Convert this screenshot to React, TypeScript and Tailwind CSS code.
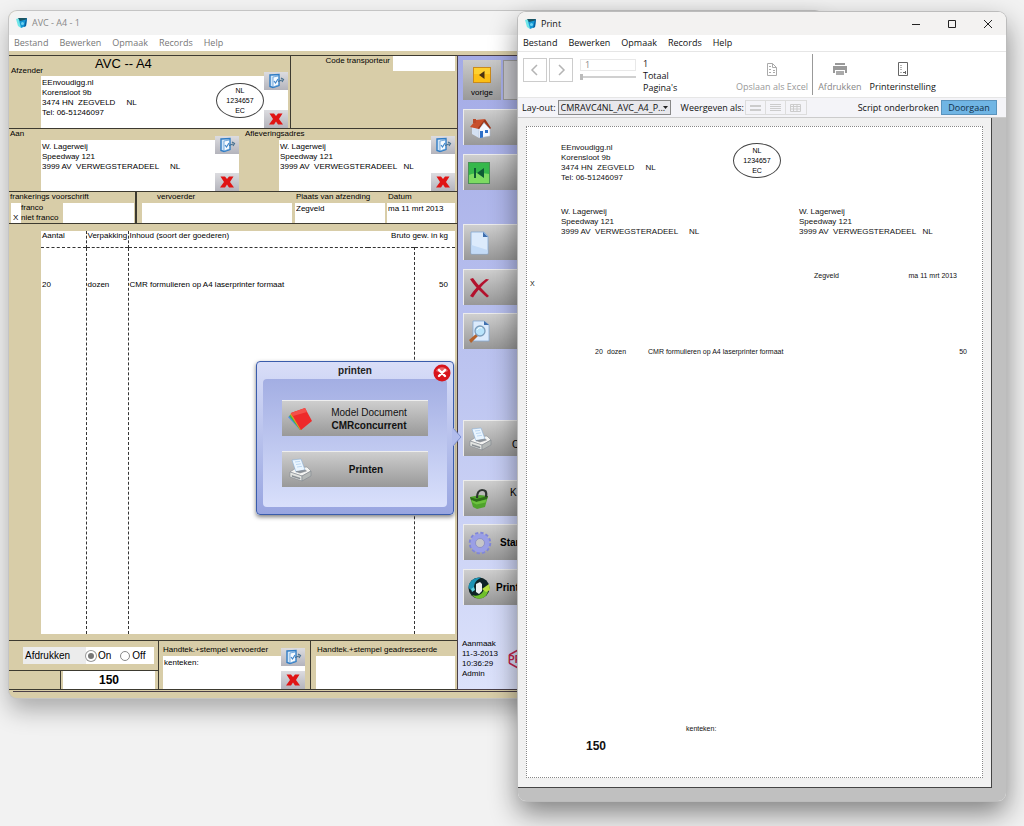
import type { ReactNode } from 'react'

const MENU = ['Bestand', 'Bewerken', 'Opmaak', 'Records', 'Help']

const AppIcon = () => (
  <svg className="w-3 h-3" viewBox="0 0 12 12">
    <path d="M0 2l4-1 1 10-3-2z" fill="#6fe6e8" />
    <path d="M3 3l8-2-1 8-5 2z" fill="#1597d4" />
    <path d="M2 1l9 0-1 1.500L4 4z" fill="#1b5563" />
    <path d="M10 2l1-1-1 8-2 1z" fill="#0b5f9e" />
    <circle cx="6.500" cy="6.500" r="1.500" fill="#6fd2f2" />
  </svg>
)

const EditIcon = () => (
  <svg className="w-[18px] h-4" viewBox="0 0 18 16" fill="none">
    <path d="M3 2l9-.5v11L6 14.500l-3-1z" fill="#d3e6f8" stroke="#2f7cc4" strokeWidth="1.400" />
    <path d="M6 4l5.500-1v9L6 14z" fill="#f6fbff" stroke="#5a9ad6" strokeWidth=".8" />
    <path d="M7 8l1.500 2L11 6" stroke="#3f86cb" strokeWidth="1.200" />
    <path d="M11 8.500l4-1.500M14 5l2.500 1.500L15 9" stroke="#47708f" strokeWidth="1.200" />
  </svg>
)

const CrossIcon = () => (
  <svg className="w-4 h-4" viewBox="0 0 16 16">
    <path d="M1.500 2.500h4.500l2 2.500 2-2.500h4.500L11 8l4 5.500h-5l-2-3-2 3H1L5 8z" fill="#e01414" />
  </svg>
)

const PrinterIcon = () => (
  <svg className="w-6 h-6" viewBox="0 0 24 24" stroke="#7b8088" strokeWidth=".5" strokeLinejoin="round">
    <path d="M2 14l6-4 11-1 4 4-9 5z" fill="#f4f4f2" />
    <path d="M4 2l9-1 4 11-9 2z" fill="#eaf5ff" stroke="#7fa9d6" />
    <path d="M7 4l5-.6M8 6.500l5-.7M9 9l5-.7" stroke="#8db8e4" />
    <path d="M2 14l12 4v5L2 19z" fill="#e2e4e1" />
    <path d="M14 18l9-5v5l-9 5z" fill="#b4b8b7" />
    <path d="M8 13.500l9-1.500 1.500 1-6.500 2z" fill="#8d949b" />
    <path d="M4 17.500l8 2.500v1L4 18.500z" fill="#8b9195" />
  </svg>
)

const BackIcon = () => (
  <svg className="w-[18px] h-4" viewBox="0 0 18 16">
    <rect x=".5" y=".5" width="17" height="15" fill="#fcbf15" stroke="#c98a1c" />
    <path d="M1 1h16v6H1z" fill="#ffe14a" opacity=".5" />
    <path d="M11.500 4v8L6 8z" fill="#4a3212" />
  </svg>
)

const HomeIcon = () => (
  <svg className="w-6 h-6" viewBox="0 0 24 24">
    <path d="M4 11l7 2v9l-7-4z" fill="#d4e1f2" />
    <path d="M11 13l5-6 6 6v7l-11 2z" fill="#f5f8ff" stroke="#a9b8d0" strokeWidth=".5" />
    <path d="M2 11l6-7 9-1-6 10z" fill="#c8502c" />
    <path d="M17 3l6 9-1 1-6-7-5 7-1-1z" fill="#9c3419" />
    <path d="M5 3h3v4H5z" fill="#b94a2b" />
    <path d="M12 15h3v6.500l-3 .5zM17 14h3v3h-3z" fill="#2e6fc8" />
  </svg>
)

const FirstIcon = () => (
  <svg className="w-[22px] h-[22px]" viewBox="0 0 22 22">
    <rect x=".5" y=".5" width="21" height="21" fill="#35b84b" stroke="#4a8f54" />
    <path d="M1 13c7-3 13-2 20-1v9H1z" fill="#7ddb62" />
    <path d="M6 6h2v10H6zM16 6v10l-7-5z" fill="#0e5b35" />
  </svg>
)

const PageIcon = () => (
  <svg className="w-6 h-6" viewBox="0 0 24 24">
    <path d="M3 1h13l4 4v18H3z" fill="#dcebfc" stroke="#86a9d4" strokeWidth=".8" />
    <path d="M3.500 14l16 5v3.500h-16z" fill="#c3dbf7" />
    <path d="M15 1l5 5h-5z" fill="#3f6fae" />
  </svg>
)

const DeleteIcon = () => (
  <svg className="w-6 h-6" viewBox="0 0 24 24" fill="#b3122d">
    <path d="M2 3l3-1c5 7 10 12 16 18l-2 1.500C13 16 6 10 2 3z" />
    <path d="M21 3.500L18 3C11 8 6 14 2 20l3 1.500C9 15 14 9 21 3.500z" />
  </svg>
)

const FindIcon = () => (
  <svg className="w-6 h-6" viewBox="0 0 24 24">
    <path d="M5 1h11l5 4v16H5z" fill="#dcebfc" stroke="#86a9d4" strokeWidth=".8" />
    <path d="M16 1l5 4h-5z" fill="#3f6fae" />
    <path d="M1 20l7-6 2 2-7 7z" fill="#b4622c" />
    <circle cx="12" cy="11" r="5" fill="#b9e4fb" stroke="#7c9dbb" strokeWidth="1.300" />
    <path d="M9 10c1-2 3-3 5-2" stroke="#fff" fill="none" />
  </svg>
)

const BasketIcon = () => (
  <svg className="w-6 h-6" viewBox="0 0 24 24">
    <path d="M2 10l10-2 8 1-3 11-8 2-4-2z" fill="#4fa32c" />
    <path d="M2 10l6 2 12-3-1 3-11 3-5-2z" fill="#2c6b18" />
    <path d="M3.500 13l5 2 10-2.500-1 3-9 2-4-2z" fill="#6cc23e" />
    <path d="M9 11c0-5 2-8 5-8s5 1 4 7" fill="none" stroke="#2d3330" strokeWidth="2.200" />
  </svg>
)

const GearIcon = () => (
  <svg className="w-6 h-6" viewBox="0 0 24 24">
    <circle cx="12" cy="12" r="10" fill="none" stroke="#8187d8" strokeWidth="2.500" strokeDasharray="3.200 2.036" />
    <circle cx="12" cy="12" r="7" fill="none" stroke="#9a9fe6" strokeWidth="5" />
    <circle cx="12" cy="12" r="4.500" fill="#c6c6c8" stroke="#7479c4" strokeWidth=".6" />
  </svg>
)

const SwirlIcon = () => (
  <svg className="w-[22px] h-[22px]" viewBox="0 0 22 22">
    <circle cx="11" cy="11" r="10.500" fill="#102426" />
    <path d="M.5 11C.5 4 7 0 13 .7 8 3 6 6 6 11l-3 2z" fill="#1c93b4" />
    <path d="M3 12l3-2 1 3-3 2z" fill="#5fd0e0" />
    <path d="M4 18c4 5 12 5 15-1s2-8 2-8l-5 3c-1 5-6 8-12 6z" fill="#6fbf2c" />
    <path d="M14 12l7-5 1 6-4 2z" fill="#b6de3e" />
    <path d="M8 7l4-2 2 2v7l-3 3-3-2z" fill="#eef1f1" />
  </svg>
)

const DocsIcon = () => (
  <svg className="w-6 h-6" viewBox="0 0 24 24">
    <path d="M0 10l6-4 8 16-2 1z" fill="#4c8ef0" />
    <path d="M1 9l6-4 7 17-2 1z" fill="#3cba4a" />
    <path d="M2 7l6-3 6 18-2 1z" fill="#e89026" />
    <path d="M3 6l14-5 7 13-11 9z" fill="#ee2a2a" />
    <path d="M3 6l14-5 2 4L5 9z" fill="#f4504a" />
  </svg>
)

const Chevron = ({ d }: { d: string }) => (
  <svg className="w-3 h-3" viewBox="0 0 12 12" fill="none" stroke="#b4b4b4" strokeWidth="1.500">
    <path d={d} />
  </svg>
)

const MenuBar = ({ tone }: { tone: string }) => (
  <nav className={`flex items-center gap-[11px] bg-white px-[5px] h-4 text-[9px] ${tone}`}>
    {MENU.map((item) => (
      <button key={item} type="button">{item}</button>
    ))}
  </nav>
)

const Stamp = () => (
  <div className="w-12 h-[35px] shrink-0 rounded-[50%] border border-[#444] flex flex-col items-center justify-center text-[7px] leading-[10px] text-black">
    <span>NL</span>
    <span>1234657</span>
    <span>EC</span>
  </div>
)

const FieldActions = ({ name }: { name: string }) => (
  <div className="-mt-1 flex w-6 shrink-0 flex-col justify-between">
    <button type="button" aria-label={`${name} wijzigen`} className="flex h-[18px] items-center justify-center bg-gradient-to-b from-[#dcdce0] to-[#b4b4bc]">
      <EditIcon />
    </button>
    <button type="button" aria-label={`${name} wissen`} className="flex h-[18px] items-center justify-center bg-gradient-to-b from-[#dcdce0] to-[#b4b4bc]">
      <CrossIcon />
    </button>
  </div>
)

const area = 'block min-w-0 flex-1 resize-none overflow-hidden bg-white p-0 pl-px pt-0.5 leading-[10px] outline-none'
const line = 'block w-full min-w-0 bg-white px-px outline-none'

const SideButton = ({ icon, name, gap, children }: { icon: ReactNode; name: string; gap: string; children?: ReactNode }) => (
  <button
    type="button"
    aria-label={name}
    className={`flex h-9 shrink-0 items-center border-l border-t border-[#ececec] bg-gradient-to-b from-[#cfcfcf] to-[#989898] pl-1 text-[10px] text-black ${gap}`}
  >
    {icon}
    {children}
  </button>
)

const Sidebar = () => (
  <aside className="flex min-w-0 flex-1 flex-col border-l border-[#4b4048] bg-gradient-to-b from-[#a4abe6] via-[#bcc4f0] to-[#dce2fb] pl-[5px] pt-1">
    <div className="flex h-10 shrink-0 gap-0.5">
      <button type="button" className="flex w-[38px] flex-col items-center justify-between bg-gradient-to-b from-[#cbcbcb] to-[#999] pb-px pt-[7px] text-[8px] text-black">
        <BackIcon />
        vorige
      </button>
      <button type="button" aria-label="volgende" className="flex-1 border border-[#999] bg-[#c6c6cc]" />
    </div>
    <SideButton icon={<HomeIcon />} name="Home" gap="mt-[9px]" />
    <SideButton icon={<FirstIcon />} name="Eerste" gap="mt-[9px]" />
    <SideButton icon={<PageIcon />} name="Nieuw" gap="mt-[34px]" />
    <SideButton icon={<DeleteIcon />} name="Verwijderen" gap="mt-[9px]" />
    <SideButton icon={<FindIcon />} name="Zoeken" gap="mt-2" />
    <SideButton icon={<PrinterIcon />} name="Printen" gap="mt-[71px]">
      <span className="ml-5 mt-3">C</span>
    </SideButton>
    <SideButton icon={<BasketIcon />} name="Kopen" gap="mt-6">
      <span className="mb-3 ml-[18px]">K</span>
    </SideButton>
    <SideButton icon={<GearIcon />} name="Start" gap="mt-2">
      <span className="ml-2 font-bold">Start</span>
    </SideButton>
    <SideButton icon={<SwirlIcon />} name="Print" gap="mt-[9px]">
      <span className="ml-1.5 font-bold">Print</span>
    </SideButton>
    <div className="mt-[34px] flex items-center gap-2.5 text-[8px] leading-[10px] text-black">
      <div className="-ml-px">
        <p>Aanmaak</p>
        <p>11-3-2013</p>
        <p>10:36:29</p>
        <p>Admin</p>
      </div>
      <svg className="h-[22px] w-10" viewBox="0 0 40 22">
        <path d="M1 7l9-5h20l9 5M1 15l9 5h20l9-5" fill="none" stroke="#c4244c" strokeWidth="1.500" />
        <text x="0" y="15" fontSize="10" fontWeight="bold" fill="#c4244c">PRO</text>
      </svg>
    </div>
  </aside>
)

const GoodsTable = () => (
  <div className="h-[416px] pl-8 pt-[7px]">
    <table className="h-[403px] w-[414px] table-fixed border-collapse bg-white text-left">
      <colgroup>
        <col className="w-[45px]" />
        <col className="w-[42px]" />
        <col className="w-[240px]" />
        <col className="w-[46px]" />
        <col />
      </colgroup>
      <thead>
        <tr className="h-4 border-b border-dashed border-[#333]">
          <th className="p-0 pl-px align-top font-normal">Aantal</th>
          <th className="border-l border-dashed border-[#333] p-0 pl-px align-top font-normal">Verpakking</th>
          <th className="border-l border-dashed border-[#333] p-0 pl-px align-top font-normal">Inhoud (soort der goederen)</th>
          <th colSpan={2} className="p-0 pr-[7px] text-right align-top font-normal">Bruto gew. in kg</th>
        </tr>
      </thead>
      <tbody>
        <tr className="align-top">
          <td className="p-0 pl-px pt-8">20</td>
          <td className="border-l border-dashed border-[#333] p-0 pl-px pt-8">dozen</td>
          <td className="border-l border-dashed border-[#333] p-0 pl-px pt-8">CMR formulieren op A4 laserprinter formaat</td>
          <td />
          <td className="border-l border-dashed border-[#333] p-0 pr-[7px] pt-8 text-right">50</td>
        </tr>
      </tbody>
    </table>
  </div>
)

const FreightForm = () => (
  <form className="w-[448px] shrink-0 border-t border-[#3d3a30] bg-[#d8cda8] text-[8px] leading-[10px] text-black">
    <div className="flex border-b border-[#3d3a30]">
      <div className="w-[282px] border-r border-[#3d3a30]">
        <div className="flex h-5 items-end">
          <label htmlFor="afzender" className="w-[86px] pl-0.5">Afzender</label>
          <h1 className="self-start text-[13px] leading-4">AVC -- A4</h1>
        </div>
        <div className="ml-8 mr-0.5 flex h-[52px] bg-white">
          <textarea id="afzender" className={area} defaultValue={'EEnvoudigg.nl\nKorensloot 9b\n3474 HN  ZEGVELD     NL\nTel: 06-51246097'} />
          <div className="pt-[7px]"><Stamp /></div>
          <FieldActions name="Afzender" />
        </div>
      </div>
      <div className="flex flex-1 justify-end gap-[3px] pr-0.5">
        <label htmlFor="code">Code transporteur</label>
        <input id="code" className="h-[15px] w-[62px] bg-white px-px outline-none" />
      </div>
    </div>

    <div className="flex h-[63px] border-b border-[#3d3a30]">
      <div className="w-[235px]">
        <label htmlFor="aan" className="block h-[11px] pl-px">Aan</label>
        <div className="ml-8 mr-[5px] flex h-[51px] bg-white">
          <textarea id="aan" className={area} defaultValue={'W. Lagerweij\nSpeedway 121\n3999 AV  VERWEGSTERADEEL     NL'} />
          <FieldActions name="Aan" />
        </div>
      </div>
      <div className="flex-1">
        <label htmlFor="adres" className="block h-[11px] pl-px">Afleveringsadres</label>
        <div className="ml-[35px] mr-0.5 flex h-[51px] bg-white">
          <textarea id="adres" className={area} defaultValue={'W. Lagerweij\nSpeedway 121\n3999 AV  VERWEGSTERADEEL   NL'} />
          <FieldActions name="Afleveringsadres" />
        </div>
      </div>
    </div>

    <div className="flex h-8 border-b border-[#3d3a30]">
      <div role="group" aria-labelledby="frankering-titel" className="w-[128px] border-r-2 border-[#3d3a30] pr-px">
        <p id="frankering-titel" className="h-[11px] pl-px">frankerings voorschrift</p>
        <div className="flex h-5 pl-0.5">
          <input aria-label="franco keuze" defaultValue="X" className="w-2.5 bg-white px-0.5 pt-2.5 outline-none" />
          <div className="w-[42px] whitespace-nowrap">
            <p>franco</p>
            <p>niet franco</p>
          </div>
          <input aria-label="frankering" className="min-w-0 flex-1 bg-white outline-none" />
        </div>
      </div>
      <div className="ml-[5px] w-[150px]">
        <label htmlFor="vervoerder" className="block h-[11px] pl-[15px]">vervoerder</label>
        <input id="vervoerder" className={`${line} h-5`} />
      </div>
      <div className="ml-[3px] w-[90px]">
        <label htmlFor="plaats" className="block h-[11px] pl-px">Plaats van afzending</label>
        <input id="plaats" defaultValue="Zegveld" className={`${line} h-5 pb-[9px]`} />
      </div>
      <div className="ml-0.5 mr-0.5 flex-1">
        <label htmlFor="datum" className="block h-[11px] pl-px">Datum</label>
        <input id="datum" defaultValue="ma 11 mrt 2013" className={`${line} h-5 pb-[9px]`} />
      </div>
    </div>

    <GoodsTable />

    <div className="flex h-[50px] border-y border-[#3d3a30]">
      <div className="flex w-[150px] flex-col border-r border-[#3d3a30]">
        <div className="flex flex-1 items-center border-b border-[#3d3a30] pl-[14px] pr-1 text-[10px]">
          <div role="radiogroup" aria-labelledby="afdrukken-titel" className="flex h-[17px] flex-1 items-center bg-white">
            <span id="afdrukken-titel" className="flex h-full w-[63px] items-center bg-[#ececec] pl-0.5">Afdrukken</span>
            <label className="flex items-center gap-0.5">
              <input type="radio" name="afdrukken" defaultChecked className="h-2.5 w-2.5 appearance-none rounded-full border-2 border-white bg-[#777] ring-1 ring-[#999]" />
              On
            </label>
            <label className="ml-[9px] flex items-center gap-0.5">
              <input type="radio" name="afdrukken" className="h-2.5 w-2.5 appearance-none rounded-full border border-[#888] bg-white" />
              Off
            </label>
          </div>
        </div>
        <div className="flex h-[18px]">
          <div className="w-[52px] border-r border-[#3d3a30]" />
          <input aria-label="Nummer" defaultValue="150" className="ml-0.5 mr-[3px] min-w-0 flex-1 bg-white text-center text-[12px] font-bold outline-none" />
        </div>
      </div>
      <div className="w-[152px] border-r border-[#3d3a30] pl-1 pr-[5px] pt-1">
        <label htmlFor="kenteken" className="block h-[11px]">Handtek.+stempel vervoerder</label>
        <div className="flex h-[33px] bg-white">
          <textarea id="kenteken" className={area} defaultValue="kenteken:" />
          <div className="-mt-1 flex">
            <FieldActions name="Kenteken" />
          </div>
        </div>
      </div>
      <div className="flex-1 pl-[5px] pr-0.5 pt-1">
        <label htmlFor="geadresseerde" className="block h-[11px] pl-px">Handtek.+stempel geadresseerde</label>
        <input id="geadresseerde" className={`${line} h-[33px]`} />
      </div>
    </div>
  </form>
)

const PrintPopover = () => (
  <div role="dialog" aria-label="printen" className="absolute left-[247px] top-[350px] w-[198px] rounded border border-[#3a5cab] bg-gradient-to-b from-[#d9def8] to-[#98a5e0] px-[6px] pb-[7px] shadow-[0_2px_4px_rgba(0,0,0,0.5)]">
    <svg className="absolute -right-[9px] top-[65px] h-5 w-[10px]" viewBox="0 0 10 20">
      <path d="M0 0l9 10-9 10z" fill="#b1bcec" />
      <path d="M1 1l8 9-8 9" fill="none" stroke="#7d90d0" />
    </svg>
    <div className="relative flex h-[17px] items-center justify-center">
      <h2 className="text-[10px] font-bold text-[#222]">printen</h2>
      <button type="button" aria-label="Sluiten" className="absolute -right-1 top-0.5">
        <svg className="h-[18px] w-[18px]" viewBox="0 0 18 18">
          <circle cx="9" cy="9" r="8.500" fill="#d8141b" />
          <path d="M3 7c2-5 10-5 12 0-4 2-8 2-12 0z" fill="#f18a8a" opacity=".7" />
          <path d="M6 6l6 6M12 6l-6 6" stroke="#fff" strokeWidth="2.400" strokeLinecap="round" />
        </svg>
      </button>
    </div>
    <div className="flex flex-col gap-[15px] rounded bg-gradient-to-b from-[#a3aee3] to-[#d9e0fb] px-[19px] pb-5 pt-[21px] text-[10px] leading-[13px] text-[#111]">
      <button type="button" className="flex h-9 items-center border-t border-[#eee] bg-gradient-to-b from-[#cecece] to-[#999] px-1.5">
        <DocsIcon />
        <span className="flex-1 pl-1">
          Model Document
          <br />
          <b>CMRconcurrent</b>
        </span>
      </button>
      <button type="button" className="flex h-9 items-center border-t border-[#eee] bg-gradient-to-b from-[#cecece] to-[#999] px-1.5">
        <PrinterIcon />
        <b className="flex-1 pr-0.5">Printen</b>
      </button>
    </div>
  </div>
)

const FormWindow = () => (
  <section className="absolute left-[9px] right-[201px] top-[11px] rounded-lg bg-[#d8cda8] font-['Liberation_Sans',Arial,sans-serif] shadow-[0_0_0_1px_#c4c4c4,0_12px_24px_rgba(0,0,0,0.3)]">
    <header className="flex h-6 items-center gap-1 rounded-t-lg bg-[#f3f3f3] pl-[7px] font-['Open_Sans',sans-serif] text-[9px] text-[#888]">
      <AppIcon />
      AVC - A4 - 1
    </header>
    <div className="font-['Open_Sans',sans-serif]">
      <MenuBar tone="text-[#777]" />
    </div>
    <div className="flex pt-1">
      <FreightForm />
      <div className="flex flex-1 border-y border-[#4b4048]">
        <Sidebar />
      </div>
    </div>
    <div className="ml-1 mt-px h-[7px] border-t border-[#4b4048]" />
    <PrintPopover />
  </section>
)

const Toolbar = () => (
  <div className="flex h-[47px] border-y border-[#e6e6e6] bg-white pl-[5px] text-[9px] leading-3">
    <div className="flex gap-0.5 pt-1.5">
      <button type="button" aria-label="Vorige pagina" className="flex h-6 w-6 items-center justify-center border border-[#ccc]">
        <Chevron d="M8 1L3 6l5 5" />
      </button>
      <button type="button" aria-label="Volgende pagina" className="flex h-6 w-6 items-center justify-center border border-[#ccc]">
        <Chevron d="M4 1l5 5-5 5" />
      </button>
    </div>
    <div className="ml-[7px] w-14 pt-[7px]">
      <input aria-label="Pagina" defaultValue="1" className="block h-3 w-full border border-[#e8e8e8] px-1 text-[#888] outline-none" />
      <input
        type="range"
        aria-label="Paginaschuif"
        min={0}
        max={10}
        defaultValue={0}
        className="mt-[3px] block h-[6px] w-full appearance-none bg-[linear-gradient(#d0d0d0,#d0d0d0)] bg-[length:100%_2px] bg-center bg-no-repeat [&::-webkit-slider-thumb]:h-[6px] [&::-webkit-slider-thumb]:w-[3px] [&::-webkit-slider-thumb]:appearance-none [&::-webkit-slider-thumb]:bg-[#bbb]"
      />
    </div>
    <div className="ml-[7px] pt-1.5">
      <p>1</p>
      <p>Totaal</p>
      <p>Pagina's</p>
    </div>
    <div className="ml-auto mr-[70px] flex">
      <button type="button" className="flex flex-col items-center pt-2.5 text-[#999]">
        <svg className="mb-1 h-[15px] w-3" viewBox="0 0 12 15" fill="none" stroke="#aaa">
          <path d="M1.500 1.500h5l4 4v8h-9zM6.500 1.500v4h4M3 4.500h2M3 7.500h2M3 10.500h2M7 8.500h2M7 10.500h2" />
        </svg>
        Opslaan als Excel
      </button>
      <div className="mx-1 my-0.5 w-px bg-[#999]" />
      <button type="button" className="ml-px flex flex-col items-center pt-[9px] text-[#888]">
        <svg className="mb-1 h-4 w-4" viewBox="0 0 16 16" fill="#999">
          <path d="M3 2h10v2H3zM1 5h14v7h-2V9H3v3H1z" />
          <path d="M4 10h8v4H4z" fill="#aaa" />
        </svg>
        Afdrukken
      </button>
      <button type="button" className="ml-2 flex flex-col items-center pt-[9px] text-[#111]">
        <svg className="mb-1 h-4 w-3" viewBox="0 0 12 16" fill="none" stroke="#666">
          <path d="M1.500 1.500h9v13h-9z" />
          <path d="M3.500 4.500h1M3.500 6.500h1M3.500 8.500h1M3.500 11.500h1M6 11.500h3M8.500 10v3" />
        </svg>
        Printerinstelling
      </button>
    </div>
  </div>
)

const ViewButton = ({ label, d }: { label: string; d: string }) => (
  <button type="button" aria-label={label} className="flex h-full w-5 items-center justify-center">
    <svg className="h-2 w-[11px]" viewBox="0 0 11 8" fill="none" stroke="#ccc">
      <path d={d} />
    </svg>
  </button>
)

const LayoutBar = () => (
  <div className="flex h-5 items-center border-b border-[#ccc] bg-[#f4f4f8] pl-1 pr-[9px] text-[9px]">
    <label htmlFor="layout">Lay-out:</label>
    <div className="relative ml-0.5">
      <select id="layout" className="block h-[15px] w-[113px] appearance-none border border-[#888] bg-[#e8e8ec] pl-0.5 text-[#111]">
        <option>CMRAVC4NL_AVC_A4_P...</option>
      </select>
      <svg className="pointer-events-none absolute right-[3px] top-1.5 h-[3px] w-[5px]" viewBox="0 0 5 3">
        <path d="M0 0h5L2.500 3z" fill="#222" />
      </svg>
    </div>
    <span className="ml-2.5">Weergeven als:</span>
    <div className="ml-px flex h-[15px] divide-x divide-[#ddd] border border-[#ddd]">
      <ViewButton label="Formulier" d="M0 1.500h11M0 2.500h11M0 5.500h11M0 6.500h11" />
      <ViewButton label="Lijst" d="M0 .5h11M0 2.500h11M0 4.500h11M0 6.500h11" />
      <ViewButton label="Tabel" d="M.5 .5h10v7H.5zM0 2.500h11M0 5h11M3.500 0v8M7 0v8" />
    </div>
    <span className="ml-auto">Script onderbroken</span>
    <button type="button" className="ml-0.5 h-[15px] w-14 border border-[#5a93bd] bg-[#70b5e4] text-[#10304a]">Doorgaan</button>
  </div>
)

const PrintPage = () => (
  <div className="flex flex-1 bg-[#c0c0c0] pb-[13px] pr-[14px]">
    <div className="flex flex-1 border-b border-r border-[#444] bg-[#f1f1f1] pb-[9px] pl-2 pr-2 pt-2">
      <article className="flex flex-1 flex-col border border-dotted border-[#888] bg-white font-['Liberation_Sans',Arial,sans-serif] text-[8px] leading-[10px] text-[#111]">
        <div className="flex pl-[34px] pt-4">
          <address className="w-[172px] whitespace-pre not-italic">{'EEnvoudigg.nl\nKorensloot 9b\n3474 HN  ZEGVELD     NL\nTel: 06-51246097'}</address>
          <Stamp />
        </div>
        <div className="mt-[24px] flex pl-[34px]">
          <address className="w-[238px] whitespace-pre not-italic">{'W. Lagerweij\nSpeedway 121\n3999 AV  VERWEGSTERADEEL     NL'}</address>
          <address className="whitespace-pre not-italic">{'W. Lagerweij\nSpeedway 121\n3999 AV  VERWEGSTERADEEL   NL'}</address>
        </div>
        <div className="mt-[34px] flex justify-between pl-[287px] pr-[25px] text-[7px]">
          <span>Zegveld</span>
          <span>ma 11 mrt 2013</span>
        </div>
        <p className="-mt-0.5 pl-[3px] text-[7px]">X</p>
        <div className="mt-[58px] flex pl-[68px] pr-[15px] text-[7px]">
          <span className="w-3">20</span>
          <span className="w-[41px]">dozen</span>
          <span className="flex-1">CMR formulieren op A4 laserprinter formaat</span>
          <span>50</span>
        </div>
        <p className="mt-auto pl-[159px] text-[7px]">kenteken:</p>
        <p className="mb-[23px] mt-1 pl-[59px] text-[12px] font-bold leading-4">150</p>
      </article>
    </div>
  </div>
)

const PrintWindow = () => (
  <section className="absolute bottom-[25px] left-[518px] right-[18px] top-3 flex flex-col overflow-hidden rounded-lg bg-white font-['Open_Sans',sans-serif] text-[#111] shadow-[0_0_0_1px_#bcbcbc,0_12px_28px_rgba(0,0,0,0.48)]">
    <header className="flex h-[23px] items-center gap-1 bg-[#f3f2f1] pl-[7px] pr-[13px] text-[9px]">
      <AppIcon />
      Print
      <div className="ml-auto flex gap-[26px]">
        <button type="button" aria-label="Minimaliseren">
          <svg className="h-2.5 w-2.5" viewBox="0 0 10 10" stroke="#222"><path d="M1 5.500h8" /></svg>
        </button>
        <button type="button" aria-label="Maximaliseren">
          <svg className="h-2.5 w-2.5" viewBox="0 0 10 10" stroke="#222" fill="none"><path d="M1.500 1.500h7v7h-7z" /></svg>
        </button>
        <button type="button" aria-label="Sluiten">
          <svg className="h-2.5 w-2.5" viewBox="0 0 10 10" stroke="#222"><path d="M1 1l8 8M9 1L1 9" /></svg>
        </button>
      </div>
    </header>
    <MenuBar tone="text-[#111]" />
    <Toolbar />
    <LayoutBar />
    <PrintPage />
  </section>
)

export default function App() {
  return (
    <main className="relative min-h-screen overflow-hidden bg-[#f2f2f2]">
      <FormWindow />
      <PrintWindow />
    </main>
  )
}
